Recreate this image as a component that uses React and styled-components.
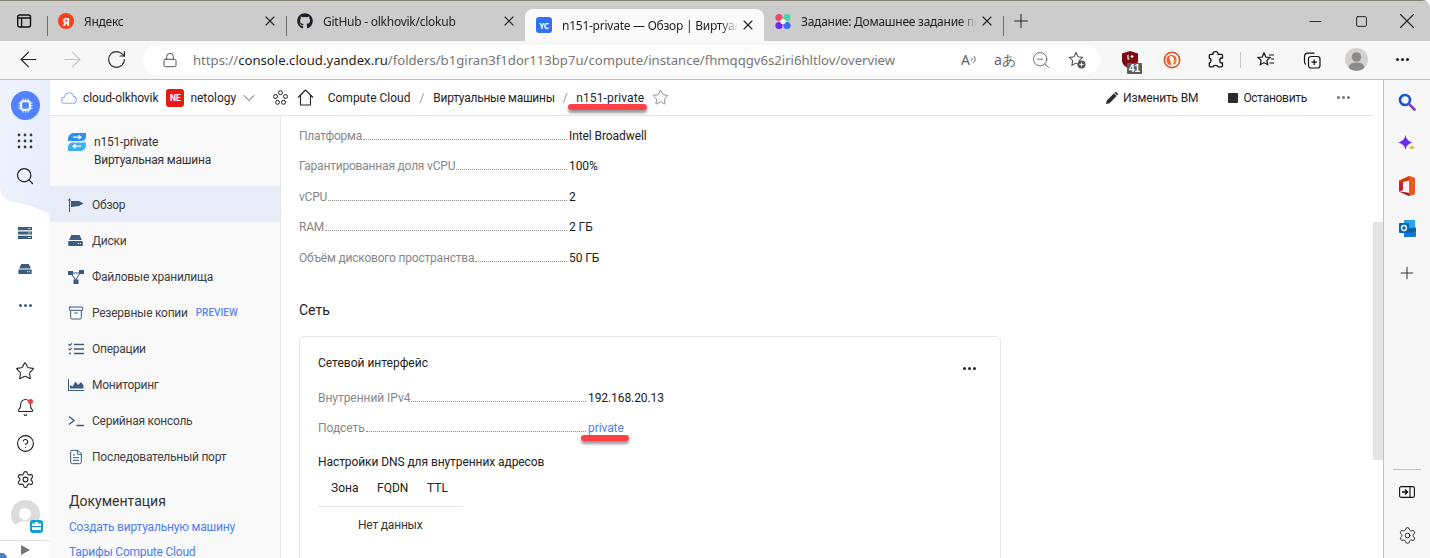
import styled, { createGlobalStyle } from 'styled-components';
import { FaGithub } from 'react-icons/fa';
import {
  ArrowLeft,
  ArrowRight,
  RotateCw,
  Lock,
  X,
  Plus,
  Minus,
  Square,
  ZoomOut,
  Star,
  ChevronDown,
  Search,
  Bell,
  CircleHelp,
  Settings,
  Archive,
  FileText,
} from 'lucide-react';

const UI_FONT = `Roboto, "Noto Sans", sans-serif`;
const CHROME_FONT = `"Noto Sans", "Open Sans", sans-serif`;
const SLATE = '#3c5c7e';

const GlobalStyle = createGlobalStyle`
  html, body { margin: 0; padding: 0; background: #fff; overflow: hidden; }
  * { box-sizing: border-box; }
`;

const Window = styled.div`
  width: 1430px;
  height: 558px;
  display: flex;
  flex-direction: column;
  overflow: hidden;
  border-top-right-radius: 8px;
  font-family: ${UI_FONT};
  color: #1f1f1f;
`;
const TabStrip = styled.div`
  height: 41px;
  flex: none;
  display: flex;
  align-items: flex-end;
  background: #cccccc;
  border-top: 1px solid #85826f;
  font-family: ${CHROME_FONT};
`;
const PanelToggle = styled.div`
  width: 47px;
  height: 40px;
  align-self: flex-end;
  display: flex;
  align-items: center;
  justify-content: center;
`;
const Tab = styled.div`
  position: relative;
  width: 239px;
  height: ${(p) => (p.$active ? '32px' : '40px')};
  padding: 0 8px 0 11px;
  display: flex;
  align-items: center;
  gap: 10px;
  font-size: 12px;
  letter-spacing: -0.25px;
  color: #222;
  background: ${(p) => (p.$active ? '#fafafa' : 'transparent')};
  border-radius: ${(p) => (p.$active ? '8px 8px 0 0' : '0')};
  &::before {
    content: '';
    display: ${(p) => (p.$sep ? 'block' : 'none')};
    position: absolute;
    left: 0;
    top: 15px;
    height: 20px;
    width: 1px;
    background: #6f6f6f;
  }
`;
const Favicon = styled.span`
  width: 16px;
  height: 16px;
  flex: none;
  display: flex;
  align-items: center;
  justify-content: center;
`;
const YandexDot = styled(Favicon)`
  border-radius: 50%;
  background: #fc3f1d;
  color: #fff;
  font: 700 11px ${CHROME_FONT};
`;
const CloudBadge = styled(Favicon)`
  border-radius: 3px;
  background: #2f74ee;
  color: #fff;
  font: 700 8px ${CHROME_FONT};
`;
const TabTitle = styled.span`
  flex: 1;
  min-width: 0;
  overflow: hidden;
  white-space: nowrap;
  mask-image: linear-gradient(to right, #000 90%, transparent 100%);
`;
const TabClose = styled(X)`
  flex: none;
  margin-left: -8px;
`;
const NewTabSlot = styled.div`
  width: 36px;
  height: 40px;
  position: relative;
  display: flex;
  align-items: center;
  justify-content: center;
  &::before {
    content: '';
    position: absolute;
    left: 0;
    top: 15px;
    height: 20px;
    width: 1px;
    background: #6f6f6f;
  }
`;
const WindowControls = styled.div`
  margin-left: auto;
  height: 40px;
  display: flex;
  align-items: center;
`;
const WindowButton = styled.div`
  width: 46px;
  height: 40px;
  display: flex;
  align-items: center;
  justify-content: center;
`;
const Toolbar = styled.div`
  height: 39px;
  flex: none;
  display: flex;
  align-items: center;
  padding: 0 5px 1px 6px;
  background: #f7f7f7;
  border-bottom: 1px solid #bfbfbf;
`;
const ToolSlot = styled.div`
  position: relative;
  width: ${(p) => p.$w || 44}px;
  height: 30px;
  flex: none;
  display: flex;
  align-items: center;
  justify-content: center;
`;
const AddressPill = styled.div`
  flex: 1;
  min-width: 0;
  height: 30px;
  margin: 0 9px 0 5px;
  padding: 0 5px 0 19px;
  display: flex;
  align-items: center;
  background: #fff;
  border-radius: 15px;
`;
const UrlText = styled.div`
  margin-left: 15px;
  flex: 1;
  font: 13.14px ${CHROME_FONT};
  color: #767676;
  white-space: nowrap;
  overflow: hidden;
  b {
    font-weight: 400;
    color: #1f1f1f;
  }
`;
const PillIcon = styled.div`
  width: 36px;
  height: 30px;
  flex: none;
  display: flex;
  align-items: center;
  justify-content: center;
`;
const ReadGlyph = styled.span`
  font: 14px ${CHROME_FONT};
  color: #666;
`;
const ToolDivider = styled.div`
  width: 1px;
  height: 16px;
  margin: 0 2px;
  flex: none;
  background: #c8c8c8;
`;
const CountBadge = styled.span`
  position: absolute;
  left: 18px;
  top: 18px;
  height: 11px;
  padding: 0 2px;
  border-radius: 1px;
  background: #5c5c5c;
  color: #fff;
  font: 700 10px/11px "Liberation Sans", sans-serif;
`;
const Body = styled.div`
  flex: 1;
  min-height: 0;
  display: flex;
`;
const Rail = styled.nav`
  width: 50px;
  flex: none;
  display: flex;
  flex-direction: column;
  align-items: center;
  background: #fff;
`;
const RailTop = styled.div`
  width: 50px;
  height: 135px;
  flex: none;
  padding-top: 11px;
  display: flex;
  flex-direction: column;
  align-items: center;
  background: linear-gradient(100deg, #eff4fe, #e6ecfb);
  clip-path: path('M0 0H50V134C40 129 30 125 18 123C6 121 0 117 0 106Z');
`;
const CpuCircle = styled.div`
  width: 29px;
  height: 29px;
  margin-bottom: 3px;
  border-radius: 50%;
  background: #5282ff;
  display: flex;
  align-items: center;
  justify-content: center;
`;
const RailSlot = styled.div`
  width: 50px;
  height: ${(p) => p.$h || 36}px;
  flex: none;
  display: flex;
  align-items: center;
  justify-content: center;
  position: relative;
`;
const RailGroup = styled.div`
  margin-top: ${(p) => p.$mt || 0}px;
  display: flex;
  flex-direction: column;
  align-items: center;
`;
const RedDot = styled.span`
  position: absolute;
  left: 28px;
  top: 10px;
  width: 5px;
  height: 5px;
  border-radius: 50%;
  background: #ff3b3b;
`;
const UserPic = styled.div`
  position: relative;
  width: 29px;
  height: 29px;
  border-radius: 50%;
  background: #dcdcdc;
  display: flex;
  align-items: flex-end;
  justify-content: center;
`;
const OrgBadge = styled.span`
  position: absolute;
  right: -3px;
  bottom: -4px;
  width: 13px;
  height: 13px;
  border-radius: 3px;
  background: #0f9ed8;
  display: flex;
  align-items: center;
  justify-content: center;
`;
const RailFoot = styled.div`
  position: relative;
  margin-top: auto;
  width: 50px;
  height: 18px;
  flex: none;
  border-top: 1px solid #e2e2e2;
  display: flex;
  align-items: center;
  justify-content: center;
  &::before {
    content: '';
    position: absolute;
    left: 0;
    bottom: 0;
    width: 7px;
    height: 5px;
    background: #4d7fc7;
    border-radius: 0 6px 0 0;
  }
`;
const PlayArrow = styled.span`
  width: 0;
  height: 0;
  border-left: 9px solid #777;
  border-top: 5px solid transparent;
  border-bottom: 5px solid transparent;
`;
const PageColumn = styled.div`
  flex: 1;
  min-width: 0;
  display: flex;
  flex-direction: column;
`;
const PageHeader = styled.header`
  height: 36px;
  flex: none;
  padding: 0 23px 0 11px;
  display: flex;
  align-items: center;
  border-bottom: 1px solid #e6e6e6;
  font-size: 12px;
`;
const HeadItem = styled.span`
  position: relative;
  margin-left: ${(p) => p.$ml || 0}px;
  letter-spacing: ${(p) => p.$ls ?? -0.1}px;
  display: inline-flex;
  align-items: center;
  white-space: nowrap;
`;
const Slash = styled(HeadItem)`
  color: #999;
`;
const RedMark = styled.span`
  position: absolute;
  left: ${(p) => p.$left}px;
  right: ${(p) => p.$right}px;
  top: ${(p) => p.$top}px;
  height: 6px;
  border-radius: 3px;
  background: #fc4045;
  box-shadow: 0 3px 3px rgba(0, 0, 0, 0.4);
`;
const NeBadge = styled.span`
  width: 18px;
  height: 18px;
  border-radius: 3px;
  background: #e31b12;
  color: #fff;
  font: 700 8.5px ${UI_FONT};
  display: flex;
  align-items: center;
  justify-content: center;
`;
const HeadActions = styled.div`
  margin-left: auto;
  display: flex;
  align-items: center;
`;
const Dots = styled.span`
  display: inline-flex;
  gap: 2px;
  i {
    width: 3px;
    height: 3px;
    border-radius: 50%;
    background: ${(p) => p.$color || '#1f1f1f'};
  }
`;
const StopBox = styled.span`
  width: 10px;
  height: 10px;
  border-radius: 1px;
  background: #2b2b2b;
`;
const ContentRow = styled.div`
  flex: 1;
  min-height: 0;
  display: flex;
`;
const Sidebar = styled.aside`
  width: 231px;
  flex: none;
  background: #f9f9f9;
  border-right: 1px solid #e6e6e6;
  overflow: hidden;
`;
const SideHead = styled.div`
  height: 70px;
  padding: 17px 0 0 18px;
  display: flex;
  gap: 8px;
  font-size: 12px;
  letter-spacing: -0.2px;
  line-height: 18px;
  color: #333;
`;
const NavRow = styled.div`
  height: 36px;
  padding: 1px 0 0 18px;
  display: flex;
  align-items: center;
  font-size: 12px;
  letter-spacing: -0.25px;
  color: #3f3f3f;
  background: ${(p) => (p.$active ? '#e7ecf8' : 'transparent')};
`;
const NavIcon = styled.span`
  width: 18px;
  margin-right: 6px;
  flex: none;
  display: flex;
  align-items: center;
`;
const PreviewTag = styled.span`
  margin-left: 8px;
  font-size: 10px;
  letter-spacing: 0;
  font-weight: 500;
  color: #5b85f0;
`;
const DocsTitle = styled.div`
  margin: 17px 0 4px 19px;
  font-size: 14px;
  line-height: 20px;
  color: #333;
`;
const DocsLink = styled.a`
  display: block;
  margin-left: 19px;
  font-size: 12px;
  letter-spacing: -0.2px;
  line-height: 25px;
  color: #4f7df0;
`;
const Main = styled.main`
  flex: 1;
  min-width: 0;
  padding: 4.5px 0 0 18px;
  overflow: hidden;
`;
const SpecRow = styled.div`
  height: ${(p) => p.$h || 30.5}px;
  display: flex;
  align-items: center;
  font-size: 12px;
`;
const SpecLabelCell = styled.div`
  width: 270px;
  flex: none;
  padding-right: 2px;
  display: flex;
  align-items: baseline;
  letter-spacing: ${(p) => p.$ls ?? -0.2}px;
  color: #888;
`;
const Leader = styled.span`
  flex: 1;
  margin-left: 1px;
  border-bottom: 1px dotted #8c8c8c;
`;
const SpecValue = styled.span`
  position: relative;
  letter-spacing: -0.08px;
  color: ${(p) => (p.$link ? '#4f7df0' : '#222')};
`;
const SectionTitle = styled.h3`
  margin: 27px 0 16px;
  font-size: 14px;
  line-height: 20px;
  font-weight: 400;
  color: #222;
`;
const Card = styled.section`
  width: 702px;
  height: 300px;
  padding: 16px 0 0 18px;
  border: 1px solid #e6e6e6;
  border-radius: 5px;
`;
const CardHead = styled.div`
  height: 20px;
  margin-bottom: 10px;
  padding-right: 24px;
  display: flex;
  justify-content: space-between;
  font-size: 12px;
  line-height: 20px;
  color: #222;
`;
const CardDots = styled.span`
  margin-top: 3px;
`;
const DnsTitle = styled.div`
  margin-top: 9px;
  font-size: 12px;
  letter-spacing: -0.08px;
  line-height: 20px;
  color: #222;
`;
const DnsTable = styled.div`
  width: 144px;
  margin-top: 6px;
  font-size: 12px;
`;
const DnsHead = styled.div`
  display: grid;
  grid-template-columns: 46px 50px auto;
  height: 29px;
  padding-left: 13px;
  line-height: 20px;
  border-bottom: 1px solid #e6e6e6;
  color: #222;
`;
const DnsEmpty = styled.div`
  padding: 8px 0 0 40px;
  line-height: 20px;
  letter-spacing: -0.2px;
  color: #333;
`;
const ScrollTrack = styled.div`
  width: 10px;
  flex: none;
  padding-top: 142px;
`;
const ScrollThumb = styled.div`
  height: 238px;
  background: #e3e3e3;
`;
const EdgeBar = styled.aside`
  width: 47px;
  flex: none;
  display: flex;
  flex-direction: column;
  padding: 1px 0;
  background: #f7f7f7;
  border-left: 1px solid #bfbfbf;
`;
const EdgeSlot = styled.div`
  height: ${(p) => p.$h || 42}px;
  flex: none;
  display: flex;
  align-items: center;
  justify-content: center;
`;
const EdgeDivider = styled.div`
  margin: auto 9px 0;
  height: 1px;
  flex: none;
  background: #c4c4c4;
`;

const specs = [
  ['Платформа', 'Intel Broadwell'],
  ['Гарантированная доля vCPU', '100%'],
  ['vCPU', '2'],
  ['RAM', '2 ГБ'],
  ['Объём дискового пространства', '50 ГБ'],
];

function ThreeDots(props) {
  return (
    <Dots {...props}>
      <i />
      <i />
      <i />
    </Dots>
  );
}

function PanelIcon() {
  return (
    <svg width="16" height="16" viewBox="0 0 16 16" fill="none" stroke="#111" strokeWidth="1.4">
      <rect x="1.7" y="2" width="12.8" height="12" rx="2" />
      <path d="M1.7 5h12.8M5.6 5v9" />
    </svg>
  );
}

function NetologyIcon() {
  return (
    <svg width="17" height="17" viewBox="0 0 16 16">
      <circle cx="4" cy="4" r="3.6" fill="#f0486e" />
      <circle cx="12" cy="4" r="3.6" fill="#4fd1a5" />
      <circle cx="4" cy="12" r="3.6" fill="#6a2ce8" />
      <circle cx="12" cy="12" r="3.6" fill="#3a6ff2" />
      <circle cx="8" cy="8" r="2.6" fill="#fff" />
    </svg>
  );
}

function SoundArcs() {
  return (
    <svg width="7" height="10" viewBox="0 0 7 10" fill="none" stroke="#666" strokeWidth="1">
      <path d="M1 6c1.200-.6 1.500-2 .8-3.200M3.500 7.500C5.500 6 5.700 3 4 1" />
    </svg>
  );
}

function FavoriteAddIcon() {
  return (
    <svg width="20" height="20" viewBox="0 0 20 20" fill="none" stroke="#555" strokeWidth="1.1">
      <path d="M9 2.500l2 4.300 4.600.6-3.400 3.200.9 4.600L9 13l-4.100 2.200.9-4.600L2.400 7.400 7 6.800z" />
      <circle cx="14.500" cy="14.500" r="4" fill="#555" stroke="none" />
      <path d="M14.500 12.500v4M12.500 14.500h4" stroke="#fff" />
    </svg>
  );
}

function ShieldIcon() {
  return (
    <svg width="18" height="20" viewBox="0 0 18 20">
      <path d="M9 1l8 2.500v7c0 4-3.500 6.800-8 8.500-4.500-1.700-8-4.500-8-8.500v-7z" fill="#7d0a12" />
      <path d="M7 5v4h1.500M11 5v3M9.500 6.500h3" stroke="#fff" strokeWidth="1.200" fill="none" />
    </svg>
  );
}

function DuckIcon() {
  return (
    <svg width="18" height="18" viewBox="0 0 18 18">
      <circle cx="9" cy="9" r="8.500" fill="#de5833" />
      <circle cx="9" cy="9" r="6.800" fill="#fff" />
      <circle cx="8.500" cy="9" r="5.200" fill="#e9633b" />
      <path d="M6.500 5.500c3-1 4.500 1 4.500 3v5.500H8c.5-3-1.500-5.500-1.500-8.500z" fill="#fff" />
      <path d="M9.500 9.500l3-.8v2l-3-.2z" fill="#f5b700" />
      <path d="M9 14l1.500-2.500 1 1.500z" fill="#5bb94a" />
    </svg>
  );
}

function PuzzleIcon() {
  return (
    <svg width="20" height="20" viewBox="0 0 20 20" fill="none" stroke="#111" strokeWidth="1.300" strokeLinejoin="round">
      <path d="M7 3.500c0-2.500 5-2.500 5 0v.8h3.500c.6 0 1 .4 1 1V8h-.8c-2.500 0-2.500 5 0 5h.8v2.800c0 .6-.4 1-1 1H12c-.5-1.800-4.500-1.800-5 0H4.300c-.6 0-1-.4-1-1V13c2.200-.5 2.200-4.500 0-5V5.300c0-.6.400-1 1-1H7z" />
    </svg>
  );
}

function FavoritesIcon() {
  return (
    <svg width="20" height="20" viewBox="0 0 20 20" fill="none" stroke="#111" strokeWidth="1.200">
      <path d="M8 3l1.800 4 4.200.5-3.100 2.900.8 4.300L8 12.600l-3.700 2.100.8-4.300L2 7.500 6.200 7z" />
      <path d="M13 5h5M15 9h3M13.500 13H18" />
    </svg>
  );
}

function CollectionsIcon() {
  return (
    <svg width="20" height="20" viewBox="0 0 20 20" fill="none" stroke="#111" strokeWidth="1.200">
      <path d="M12.500 3.200H6a3.500 3.500 0 0 0-3.500 3.500V12c0 1 .5 2 1.500 2.500" />
      <rect x="6.500" y="6.500" width="11.500" height="11.500" rx="2.500" />
      <path d="M12.200 9.500v5.500M9.500 12.200H15" />
    </svg>
  );
}

function ProfileAvatar() {
  return (
    <svg width="23" height="23" viewBox="0 0 23 23">
      <circle cx="11.500" cy="11.500" r="11.500" fill="#d4d2d0" />
      <circle cx="11.500" cy="9" r="4.800" fill="#8e8c8a" />
      <path d="M3.500 19.500c1-3.800 4-5 8-5s7 1.200 8 5a11.500 11.500 0 0 1-16 0z" fill="#8e8c8a" />
    </svg>
  );
}

function ChipIcon() {
  return (
    <svg width="15" height="15" viewBox="0 0 15 15" fill="none" stroke="#fff">
      <rect x="3.200" y="3.200" width="8.600" height="8.600" rx="1.500" strokeWidth="2" />
      <path d="M5 0.500v2M7.500 0.500v2M10 0.500v2M5 12.500v2M7.500 12.500v2M10 12.500v2M0.500 5h2M0.500 7.500h2M0.500 10h2M12.500 5h2M12.500 7.500h2M12.500 10h2" strokeWidth="1" />
    </svg>
  );
}

function GridIcon() {
  const cells = [];
  for (let y = 0; y < 3; y++) {
    for (let x = 0; x < 3; x++) {
      cells.push(<circle key={`${x}${y}`} cx={2 + x * 6} cy={2 + y * 6} r="1.400" fill="#3a3a3a" />);
    }
  }
  return (
    <svg width="16" height="16" viewBox="0 0 16 16">
      {cells}
    </svg>
  );
}

function ServerIcon() {
  return (
    <svg width="14" height="12" viewBox="0 0 14 12" fill={SLATE}>
      <path d="M0 0h14v3.200H0zM0 4.400h14v3.200H0zM0 8.800h14V12H0z" />
      <path d="M10 1.100h2.500v1H10zM10 5.500h2.500v1H10zM10 9.900h2.500v1H10z" fill="#c6d2de" />
    </svg>
  );
}

function DiskIcon({ small }) {
  return (
    <svg width={small ? 14 : 15} height={small ? 10 : 11} viewBox="0 0 16 12" fill={SLATE}>
      <path d="M3.500 0h9L15 5.500H1z" />
      <path d="M1 6.500h14c.6 0 1 .4 1 1V11c0 .6-.4 1-1 1H1c-.6 0-1-.4-1-1V7.500c0-.6.400-1 1-1z" />
      <path d="M10.500 8.700h1.200v1.200h-1.200zM12.700 8.700h1.200v1.200h-1.200z" fill="#fff" />
    </svg>
  );
}

function FlagIcon() {
  return (
    <svg width="16" height="14" viewBox="0 0 16 14" fill={SLATE}>
      <path d="M1 1.500h1V14H1zM0 2.500L1.500 0 3 2.500z" />
      <path d="M3 3h8l4.500 2.500L11 8l-8 1z" />
    </svg>
  );
}

function ShareIcon() {
  return (
    <svg width="16" height="14" viewBox="0 0 16 14" fill={SLATE}>
      <path d="M0 1h5v4H0zM11 0h5v4h-5zM5.500 9.500h5V14h-5z" />
      <path d="M5 2.500h6v1H5zM3.500 5h1l4 5h-1.300zM12 4l-3.500 5.500h-1L11 4z" />
    </svg>
  );
}

function ChecklistIcon() {
  return (
    <svg width="16" height="12" viewBox="0 0 16 12" fill="none" stroke={SLATE} strokeWidth="1.500">
      <path d="M6 1.500h10M6 6h10M6 10.500h10" />
      <path d="M0.500 1.200l1.300 1.300L4 .3M0.500 5.700L1.800 7 4 4.800" strokeWidth="1.100" />
      <circle cx="2" cy="10.500" r="1" fill={SLATE} stroke="none" />
    </svg>
  );
}

function CrownChartIcon() {
  return (
    <svg width="16" height="12" viewBox="0 0 16 12" fill={SLATE}>
      <path d="M0 0h1v11h15v1H0z" />
      <path d="M2 9.500V6l2.500 1.500L7.500 2.500l2.500 3.500 3-3 2.500 3.500v3z" />
    </svg>
  );
}

function TerminalIcon() {
  return (
    <svg width="16" height="12" viewBox="0 0 16 12" fill="none" stroke={SLATE} strokeWidth="1.400">
      <path d="M1 1.500L6 5.500 1 9.500M8.500 10.500H16" />
    </svg>
  );
}

function NodesIcon() {
  return (
    <svg width="15" height="15" viewBox="0 0 15 15" fill="none" stroke="#222" strokeWidth="1">
      <circle cx="7.500" cy="2.700" r="2" />
      <circle cx="2.500" cy="6.500" r="2" />
      <circle cx="12.500" cy="6.500" r="2" />
      <circle cx="4.500" cy="12.300" r="2" />
      <circle cx="10.500" cy="12.300" r="2" />
    </svg>
  );
}

function HouseIcon() {
  return (
    <svg width="17" height="17" viewBox="0 0 17 17" fill="none" stroke="#222" strokeWidth="1.100" strokeLinejoin="round">
      <path d="M1 8.500L8.500 1 16 8.500M3.500 6.500V16h10V6.500" />
    </svg>
  );
}

function CloudOutline() {
  return (
    <svg width="16" height="12" viewBox="0 0 16 12" fill="none" stroke="#8fb0ee" strokeWidth="1.100">
      <path d="M4 11.300C1.800 11.300.6 9.800.6 8.200c0-1.600 1.200-2.800 2.700-2.900C3.800 2.600 5.700.7 8 .7c2.200 0 4 1.500 4.500 3.700 1.700.2 2.900 1.700 2.900 3.300 0 2-1.500 3.600-3.500 3.600z" />
    </svg>
  );
}

function PencilIcon() {
  return (
    <svg width="12" height="12" viewBox="0 0 12 12" fill="#2b2b2b">
      <path d="M0 12l.8-3.500L8 1.300 10.700 4 3.500 11.200zM8.800.5c.6-.6 1.400-.6 2 0l.7.7c.6.6.6 1.400 0 2l-.2.200L8.600.7z" />
    </svg>
  );
}

function VmIcon() {
  return (
    <svg width="18" height="18" viewBox="0 0 18 18">
      <path d="M6 0h12v3.500C18 6 16 8 13.500 8H0V6c0-3.300 2.700-6 6-6z" fill="#2f8ff0" />
      <path d="M4.500 9.500H18V12c0 3.300-2.700 6-6 6H0v-4c0-2.500 2-4.500 4.500-4.500z" fill="#3bb0f8" />
      <path d="M5 4.200h8M10.500 2.200L13 4.200l-2.500 2M13 13.200H5M7.500 11.200L5 13.200l2.500 2" stroke="#fff" strokeWidth="1.200" fill="none" />
    </svg>
  );
}

function BingIcon() {
  return (
    <svg width="18" height="18" viewBox="0 0 18 18" fill="none">
      <circle cx="7" cy="7" r="5" stroke="#1758cc" strokeWidth="2.600" />
      <path d="M11 11l5.500 5.500" stroke="#7a3fd0" strokeWidth="2.600" strokeLinecap="round" />
    </svg>
  );
}

function SparkIcon() {
  return (
    <svg width="18" height="18" viewBox="0 0 18 18">
      <path d="M7.500 0c.8 4 2.500 6 7 7.500-4.500 1.500-6.200 3.500-7 7.500-.8-4-2.500-6-7.500-7.500 5-1.500 6.700-3.500 7.500-7.500z" fill="#6a2cf5" />
      <path d="M14 9.500c.3 1.700 1 2.500 3.500 3-2.500.5-3.200 1.300-3.500 3-.3-1.700-1-2.500-3.500-3 2.500-.5 3.200-1.300 3.500-3z" fill="#f7b21b" />
    </svg>
  );
}

function OfficeIcon() {
  return (
    <svg width="16" height="20" viewBox="0 0 16 20">
      <path d="M0 4.500L10 0l6 2v16l-6 2L0 15.500 10 17V4.500L4 6v8l-4 1.500z" fill="#d83b01" />
      <path d="M10 0l6 2v16l-6 2z" fill="#eb5a1c" />
      <path d="M0 15.500L4 14V6L0 7.500z" fill="#c4203a" />
      <path d="M0 15.500L10 17v3z" fill="#a51c30" />
    </svg>
  );
}

function OutlookIcon() {
  return (
    <svg width="17" height="17" viewBox="0 0 17 17">
      <rect x="5" y="0" width="11" height="8" fill="#28a8ea" />
      <path d="M5 8h12v8a1 1 0 0 1-1 1H5z" fill="#0f78d4" />
      <path d="M8 10l9-3v4l-5 2z" fill="#14447d" opacity=".55" />
      <rect x="0" y="3" width="10" height="10" rx="1" fill="#0a64b8" />
      <circle cx="5" cy="8" r="2.500" fill="none" stroke="#fff" strokeWidth="1.300" />
    </svg>
  );
}

function DockIcon() {
  return (
    <svg width="16" height="12" viewBox="0 0 16 12" fill="none" stroke="#111" strokeWidth="1.100">
      <rect x="0.600" y="0.600" width="14.800" height="10.800" rx="1.500" />
      <path d="M11 0.600v10.800" />
      <path d="M3 6h5M6 3.500L8.500 6 6 8.500" strokeWidth="1.300" />
    </svg>
  );
}

function App() {
  return (
    <Window>
      <GlobalStyle />
      <TabStrip>
        <PanelToggle>
          <PanelIcon />
        </PanelToggle>
        <Tab $sep>
          <YandexDot>Я</YandexDot>
          <TabTitle>Яндекс</TabTitle>
          <TabClose size={16} color="#222" strokeWidth={1.6} />
        </Tab>
        <Tab $sep>
          <Favicon>
            <FaGithub size={16} color="#1b1f23" />
          </Favicon>
          <TabTitle>GitHub - olkhovik/clokub</TabTitle>
          <TabClose size={16} color="#222" strokeWidth={1.6} />
        </Tab>
        <Tab $active>
          <CloudBadge>YC</CloudBadge>
          <TabTitle>n151-private — Обзор | Виртуальная машина</TabTitle>
          <TabClose size={16} color="#222" strokeWidth={1.6} />
        </Tab>
        <Tab>
          <Favicon>
            <NetologyIcon />
          </Favicon>
          <TabTitle>Задание: Домашнее задание по теме</TabTitle>
          <TabClose size={16} color="#222" strokeWidth={1.6} />
        </Tab>
        <NewTabSlot>
          <Plus size={22} color="#222" strokeWidth={1.1} />
        </NewTabSlot>
        <WindowControls>
          <WindowButton>
            <Minus size={19} color="#222" strokeWidth={1.2} />
          </WindowButton>
          <WindowButton>
            <Square size={13} color="#222" strokeWidth={1.8} />
          </WindowButton>
          <WindowButton>
            <X size={26} color="#222" strokeWidth={1} />
          </WindowButton>
        </WindowControls>
      </TabStrip>

      <Toolbar>
        <ToolSlot>
          <ArrowLeft size={25} color="#222" strokeWidth={1.1} />
        </ToolSlot>
        <ToolSlot>
          <ArrowRight size={25} color="#c4c4c4" strokeWidth={1.1} />
        </ToolSlot>
        <ToolSlot>
          <RotateCw size={21} color="#222" strokeWidth={1.25} />
        </ToolSlot>
        <AddressPill>
          <Lock size={16} color="#555" strokeWidth={1.5} />
          <UrlText>
            https://<b>console.cloud.yandex.ru</b>/folders/b1giran3f1dor113bp7u/compute/instance/fhmqqgv6s2iri6hltlov/overview
          </UrlText>
          <PillIcon>
            <ReadGlyph>A</ReadGlyph>
            <SoundArcs />
          </PillIcon>
          <PillIcon>
            <ReadGlyph>aあ</ReadGlyph>
          </PillIcon>
          <PillIcon>
            <ZoomOut size={20} color="#666" strokeWidth={1.1} />
          </PillIcon>
          <PillIcon>
            <FavoriteAddIcon />
          </PillIcon>
        </AddressPill>
        <ToolSlot $w={42}>
          <ShieldIcon />
          <CountBadge>41</CountBadge>
        </ToolSlot>
        <ToolSlot $w={42}>
          <DuckIcon />
        </ToolSlot>
        <ToolSlot $w={45}>
          <PuzzleIcon />
        </ToolSlot>
        <ToolDivider />
        <ToolSlot $w={46}>
          <FavoritesIcon />
        </ToolSlot>
        <ToolSlot $w={45}>
          <CollectionsIcon />
        </ToolSlot>
        <ToolSlot $w={45}>
          <ProfileAvatar />
        </ToolSlot>
        <ToolSlot $w={46}>
          <ThreeDots $color="#222" />
        </ToolSlot>
      </Toolbar>

      <Body>
        <Rail>
          <RailTop>
            <CpuCircle>
              <ChipIcon />
            </CpuCircle>
            <RailSlot $h={35}>
              <GridIcon />
            </RailSlot>
            <RailSlot $h={35}>
              <Search size={20} color="#222" strokeWidth={1.5} />
            </RailSlot>
          </RailTop>
          <RailGroup>
            <RailSlot>
              <ServerIcon />
            </RailSlot>
            <RailSlot>
              <DiskIcon small />
            </RailSlot>
            <RailSlot>
              <ThreeDots $color={SLATE} />
            </RailSlot>
          </RailGroup>
          <RailGroup $mt={29}>
            <RailSlot $h={37}>
              <Star size={20} color="#222" strokeWidth={1.3} />
            </RailSlot>
            <RailSlot>
              <Bell size={19} color="#222" strokeWidth={1.3} />
              <RedDot />
            </RailSlot>
            <RailSlot>
              <CircleHelp size={19} color="#222" strokeWidth={1.4} />
            </RailSlot>
            <RailSlot>
              <Settings size={19} color="#222" strokeWidth={1.4} />
            </RailSlot>
            <RailSlot $h={34}>
              <UserPic>
                <svg width="20" height="24" viewBox="0 0 20 24">
                  <circle cx="10" cy="9" r="6" fill="#fff" />
                  <path d="M0 24c0-5 4-8 10-8s10 3 10 8z" fill="#fff" />
                </svg>
                <OrgBadge>
                  <svg width="9" height="8" viewBox="0 0 9 8" fill="#fff">
                    <path d="M3 0h3v1.500h3V4H0V1.500h3zM0 5h9v3H0z" />
                  </svg>
                </OrgBadge>
              </UserPic>
            </RailSlot>
          </RailGroup>
          <RailFoot>
            <PlayArrow />
          </RailFoot>
        </Rail>

        <PageColumn>
          <PageHeader>
            <HeadItem>
              <CloudOutline />
            </HeadItem>
            <HeadItem $ml={6}>cloud-olkhovik</HeadItem>
            <HeadItem $ml={8}>
              <NeBadge>NE</NeBadge>
            </HeadItem>
            <HeadItem $ml={6} $ls={0}>
              netology
            </HeadItem>
            <HeadItem $ml={3}>
              <ChevronDown size={20} color="#444" strokeWidth={1.1} />
            </HeadItem>
            <HeadItem $ml={14}>
              <NodesIcon />
            </HeadItem>
            <HeadItem $ml={9}>
              <HouseIcon />
            </HeadItem>
            <HeadItem $ml={13.5} $ls={0}>
              Compute Cloud
            </HeadItem>
            <Slash $ml={9}>/</Slash>
            <HeadItem $ml={9} $ls={-0.25}>
              Виртуальные машины
            </HeadItem>
            <Slash $ml={8}>/</Slash>
            <HeadItem $ml={8.5} $ls={0.15}>
              n151-private
              <RedMark $left={-8} $right={-3} $top={13} />
            </HeadItem>
            <HeadItem $ml={8}>
              <Star size={17} color="#777" strokeWidth={1.2} />
            </HeadItem>
            <HeadActions>
              <PencilIcon />
              <HeadItem $ml={5} $ls={-0.15}>
                Изменить ВМ
              </HeadItem>
              <HeadItem $ml={30}>
                <StopBox />
              </HeadItem>
              <HeadItem $ml={5} $ls={-0.3}>
                Остановить
              </HeadItem>
              <HeadItem $ml={30}>
                <ThreeDots $color="#777" />
              </HeadItem>
            </HeadActions>
          </PageHeader>

          <ContentRow>
            <Sidebar>
              <SideHead>
                <VmIcon />
                <div>
                  n151-private
                  <br />
                  Виртуальная машина
                </div>
              </SideHead>
              <NavRow $active>
                <NavIcon>
                  <FlagIcon />
                </NavIcon>
                Обзор
              </NavRow>
              <NavRow>
                <NavIcon>
                  <DiskIcon />
                </NavIcon>
                Диски
              </NavRow>
              <NavRow>
                <NavIcon>
                  <ShareIcon />
                </NavIcon>
                Файловые хранилища
              </NavRow>
              <NavRow>
                <NavIcon>
                  <Archive size={16} color={SLATE} strokeWidth={1.5} />
                </NavIcon>
                Резервные копии
                <PreviewTag>PREVIEW</PreviewTag>
              </NavRow>
              <NavRow>
                <NavIcon>
                  <ChecklistIcon />
                </NavIcon>
                Операции
              </NavRow>
              <NavRow>
                <NavIcon>
                  <CrownChartIcon />
                </NavIcon>
                Мониторинг
              </NavRow>
              <NavRow>
                <NavIcon>
                  <TerminalIcon />
                </NavIcon>
                Серийная консоль
              </NavRow>
              <NavRow>
                <NavIcon>
                  <FileText size={16} color={SLATE} strokeWidth={1.5} />
                </NavIcon>
                Последовательный порт
              </NavRow>
              <DocsTitle>Документация</DocsTitle>
              <DocsLink>Создать виртуальную машину</DocsLink>
              <DocsLink>Тарифы Compute Cloud</DocsLink>
            </Sidebar>

            <Main>
              {specs.map(([label, value]) => (
                <SpecRow key={label}>
                  <SpecLabelCell>
                    {label}
                    <Leader />
                  </SpecLabelCell>
                  <SpecValue>{value}</SpecValue>
                </SpecRow>
              ))}
              <SectionTitle>Сеть</SectionTitle>
              <Card>
                <CardHead>
                  Сетевой интерфейс
                  <CardDots>
                    <ThreeDots $color="#222" />
                  </CardDots>
                </CardHead>
                <SpecRow $h={30}>
                  <SpecLabelCell $ls={-0.05}>
                    Внутренний IPv4
                    <Leader />
                  </SpecLabelCell>
                  <SpecValue>192.168.20.13</SpecValue>
                </SpecRow>
                <SpecRow $h={30}>
                  <SpecLabelCell $ls={-0.05}>
                    Подсеть
                    <Leader />
                  </SpecLabelCell>
                  <SpecValue $link>
                    private
                    <RedMark $left={-7} $right={-5} $top={14} />
                  </SpecValue>
                </SpecRow>
                <DnsTitle>Настройки DNS для внутренних адресов</DnsTitle>
                <DnsTable>
                  <DnsHead>
                    <span>Зона</span>
                    <span>FQDN</span>
                    <span>TTL</span>
                  </DnsHead>
                  <DnsEmpty>Нет данных</DnsEmpty>
                </DnsTable>
              </Card>
            </Main>
          </ContentRow>
        </PageColumn>

        <ScrollTrack>
          <ScrollThumb />
        </ScrollTrack>

        <EdgeBar>
          <EdgeSlot>
            <BingIcon />
          </EdgeSlot>
          <EdgeSlot>
            <SparkIcon />
          </EdgeSlot>
          <EdgeSlot>
            <OfficeIcon />
          </EdgeSlot>
          <EdgeSlot>
            <OutlookIcon />
          </EdgeSlot>
          <EdgeSlot $h={48}>
            <Plus size={20} color="#333" strokeWidth={1.2} />
          </EdgeSlot>
          <EdgeDivider />
          <EdgeSlot $h={44}>
            <DockIcon />
          </EdgeSlot>
          <EdgeSlot $h={43}>
            <Settings size={19} color="#222" strokeWidth={1.2} />
          </EdgeSlot>
        </EdgeBar>
      </Body>
    </Window>
  );
}

export default App;
